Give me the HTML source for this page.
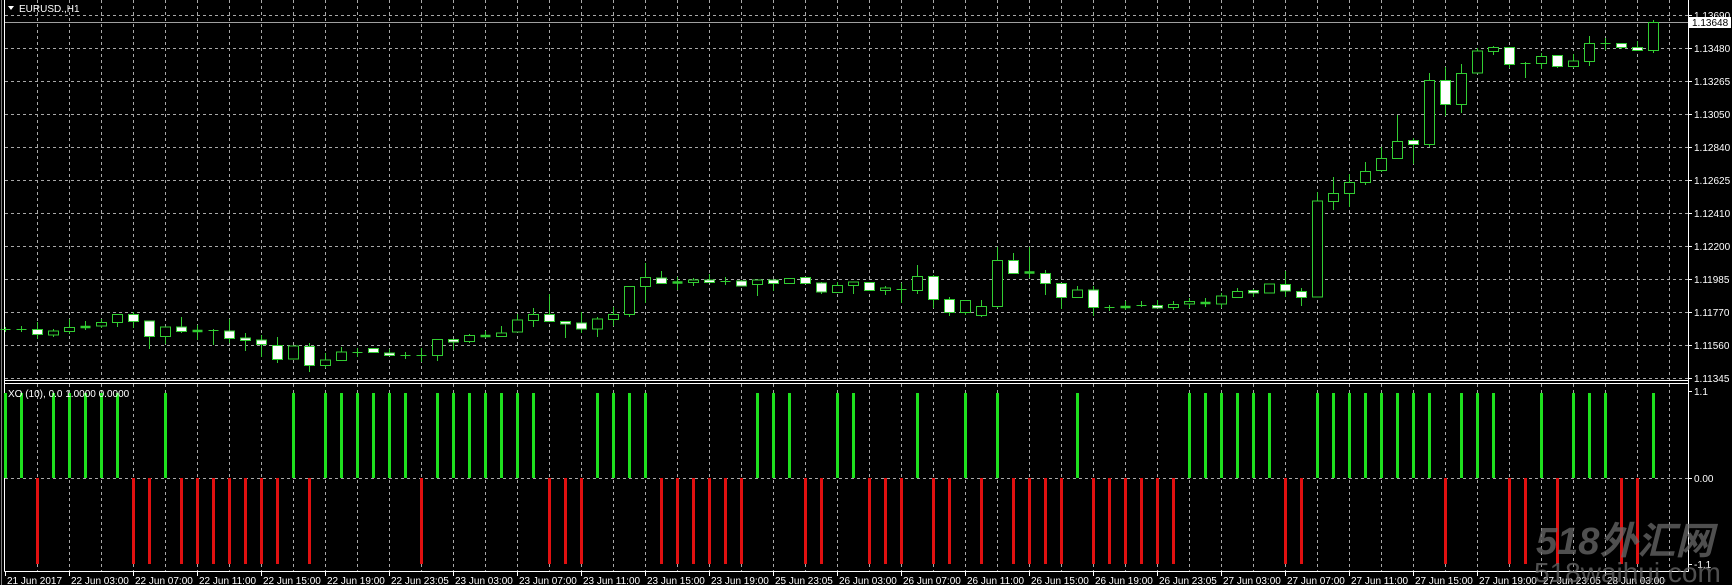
<!DOCTYPE html>
<html><head><meta charset="utf-8"><style>
html,body{margin:0;padding:0;background:#000;overflow:hidden}
svg{display:block}
text{font-family:"Liberation Sans",Arial,sans-serif}
</style></head><body>
<svg width="1732" height="585" viewBox="0 0 1732 585" xmlns="http://www.w3.org/2000/svg">
<rect width="1732" height="585" fill="#000"/>
<g stroke="#a8a8a8" stroke-width="1" stroke-dasharray="3,3" fill="none">
<path d="M37.5 0V380M69.5 0V380M101.5 0V380M133.5 0V380M165.5 0V380M197.5 0V380M229.5 0V380M261.5 0V380M293.5 0V380M325.5 0V380M357.5 0V380M389.5 0V380M421.5 0V380M453.5 0V380M485.5 0V380M517.5 0V380M549.5 0V380M581.5 0V380M613.5 0V380M645.5 0V380M677.5 0V380M709.5 0V380M741.5 0V380M773.5 0V380M805.5 0V380M837.5 0V380M869.5 0V380M901.5 0V380M933.5 0V380M965.5 0V380M997.5 0V380M1029.5 0V380M1061.5 0V380M1093.5 0V380M1125.5 0V380M1157.5 0V380M1189.5 0V380M1221.5 0V380M1253.5 0V380M1285.5 0V380M1317.5 0V380M1349.5 0V380M1381.5 0V380M1413.5 0V380M1445.5 0V380M1477.5 0V380M1509.5 0V380M1541.5 0V380M1573.5 0V380M1605.5 0V380M1637.5 0V380M1669.5 0V380"/>
<path d="M37.5 384V571M69.5 384V571M101.5 384V571M133.5 384V571M165.5 384V571M197.5 384V571M229.5 384V571M261.5 384V571M293.5 384V571M325.5 384V571M357.5 384V571M389.5 384V571M421.5 384V571M453.5 384V571M485.5 384V571M517.5 384V571M549.5 384V571M581.5 384V571M613.5 384V571M645.5 384V571M677.5 384V571M709.5 384V571M741.5 384V571M773.5 384V571M805.5 384V571M837.5 384V571M869.5 384V571M901.5 384V571M933.5 384V571M965.5 384V571M997.5 384V571M1029.5 384V571M1061.5 384V571M1093.5 384V571M1125.5 384V571M1157.5 384V571M1189.5 384V571M1221.5 384V571M1253.5 384V571M1285.5 384V571M1317.5 384V571M1349.5 384V571M1381.5 384V571M1413.5 384V571M1445.5 384V571M1477.5 384V571M1509.5 384V571M1541.5 384V571M1573.5 384V571M1605.5 384V571M1637.5 384V571M1669.5 384V571"/>
<path d="M5 15.5H1688M5 48.5H1688M5 81.5H1688M5 114.5H1688M5 147.5H1688M5 180.5H1688M5 213.5H1688M5 246.5H1688M5 279.5H1688M5 312.5H1688M5 345.5H1688M5 378.5H1688M5 478.5H1688"/>
</g>
<path d="M5 22.5H1688" stroke="#a0a0a0" stroke-width="1"/>
<g stroke="#ffffff" stroke-width="1" fill="none">
<path d="M4.5 0V571.5M1688.5 0V571.5M4.5 380.5H1688.5M4.5 383.5H1688.5M4.5 571.5H1688.5"/>
<path d="M1.5 0V585" stroke="#808080"/>
<path d="M5.5 572V576M69.5 572V576M133.5 572V576M197.5 572V576M261.5 572V576M325.5 572V576M389.5 572V576M453.5 572V576M517.5 572V576M581.5 572V576M645.5 572V576M709.5 572V576M773.5 572V576M837.5 572V576M901.5 572V576M965.5 572V576M1029.5 572V576M1093.5 572V576M1157.5 572V576M1221.5 572V576M1285.5 572V576M1349.5 572V576M1413.5 572V576M1477.5 572V576M1541.5 572V576M1605.5 572V576"/>
<path d="M1688 15.5h4M1688 48.5h4M1688 81.5h4M1688 114.5h4M1688 147.5h4M1688 180.5h4M1688 213.5h4M1688 246.5h4M1688 279.5h4M1688 312.5h4M1688 345.5h4M1688 378.5h4M1688 391.5h4M1688 478.5h4M1688 564.5h4"/>
</g>
<path stroke="#32cd32" stroke-width="1" fill="none" d="M5.5 327V332M21.5 326V332M37.5 322V339M53.5 329V337M69.5 319V334M85.5 321V330M101.5 319V328M117.5 314V327M133.5 312V328M149.5 321V349M165.5 327V344M181.5 317V333M197.5 325V340M213.5 329V345M229.5 319V343M245.5 333V351M261.5 335V357M277.5 337V363M293.5 346V359M309.5 343V372M325.5 353V368M341.5 347V361M357.5 348V357M373.5 348V353M389.5 349V356M405.5 352V359M421.5 348V362M437.5 339V361M453.5 339V350M469.5 334V343M485.5 331V338M501.5 326V337M517.5 314V332M533.5 308V327M549.5 294V322M565.5 321V338M581.5 312V333M597.5 317V337M613.5 307V326M629.5 286V317M645.5 263V303M661.5 271V283M677.5 277V290M693.5 278V286M709.5 274V283M725.5 277V285M741.5 280V286M757.5 280V296M773.5 280V291M789.5 278V284M805.5 277V284M821.5 282V294M837.5 282V293M853.5 282V294M869.5 282V291M885.5 286V295M901.5 283V303M917.5 265V294M933.5 275V308M949.5 297V316M965.5 300V315M981.5 300V317M997.5 247V308M1013.5 253V273M1029.5 247V278M1045.5 270V295M1061.5 283V309M1077.5 286V298M1093.5 286V316M1109.5 305V311M1125.5 301V310M1141.5 301V307M1157.5 300V308M1173.5 301V310M1189.5 298V308M1205.5 298V307M1221.5 293V308M1237.5 288V297M1253.5 289V297M1269.5 284V293M1285.5 271V297M1301.5 288V306M1317.5 192V297M1333.5 177V210M1349.5 174V207M1365.5 162V185M1381.5 147V172M1397.5 115V159M1413.5 138V164M1429.5 73V147M1445.5 67V116M1461.5 64V113M1477.5 48V73M1493.5 46V55M1509.5 47V68M1525.5 62V78M1541.5 53V69M1557.5 55V68M1573.5 54V68M1589.5 36V66M1605.5 38V50M1621.5 43V49M1637.5 41V50M1653.5 20V53"/>
<g fill="#000" stroke="#32cd32" stroke-width="1">
<rect x="48.5" y="331" width="10" height="4"/>
<rect x="64.5" y="327.5" width="10" height="4"/>
<rect x="96.5" y="322.5" width="10" height="3.5"/>
<rect x="112.5" y="314.5" width="10" height="8"/>
<rect x="160.5" y="327" width="10" height="9.5"/>
<rect x="288.5" y="346" width="10" height="13"/>
<rect x="320.5" y="360" width="10" height="5.5"/>
<rect x="336.5" y="352" width="10" height="8.5"/>
<rect x="432.5" y="339.5" width="10" height="16"/>
<rect x="464.5" y="335.5" width="10" height="6"/>
<rect x="496.5" y="333" width="10" height="3.5"/>
<rect x="512.5" y="320" width="10" height="12"/>
<rect x="528.5" y="314.5" width="10" height="6"/>
<rect x="592.5" y="319" width="10" height="10"/>
<rect x="608.5" y="314.5" width="10" height="5"/>
<rect x="624.5" y="286.5" width="10" height="28"/>
<rect x="640.5" y="277.5" width="10" height="9"/>
<rect x="688.5" y="280" width="10" height="2.5"/>
<rect x="752.5" y="280" width="10" height="4.5"/>
<rect x="784.5" y="278.5" width="10" height="5"/>
<rect x="832.5" y="285.5" width="10" height="7"/>
<rect x="848.5" y="282" width="10" height="3.5"/>
<rect x="880.5" y="288" width="10" height="2.5"/>
<rect x="912.5" y="276.5" width="10" height="14"/>
<rect x="960.5" y="300.5" width="10" height="12"/>
<rect x="976.5" y="306.5" width="10" height="9"/>
<rect x="992.5" y="260.5" width="10" height="46"/>
<rect x="1072.5" y="290" width="10" height="7.5"/>
<rect x="1168.5" y="304.5" width="10" height="3"/>
<rect x="1184.5" y="301.5" width="10" height="2.5"/>
<rect x="1216.5" y="296" width="10" height="8"/>
<rect x="1232.5" y="291.5" width="10" height="6"/>
<rect x="1264.5" y="284" width="10" height="9"/>
<rect x="1312.5" y="201" width="10" height="96"/>
<rect x="1328.5" y="193.5" width="10" height="8"/>
<rect x="1344.5" y="182.5" width="10" height="11"/>
<rect x="1360.5" y="171.5" width="10" height="11"/>
<rect x="1376.5" y="158.5" width="10" height="12"/>
<rect x="1392.5" y="141.5" width="10" height="17"/>
<rect x="1424.5" y="80.5" width="10" height="64"/>
<rect x="1456.5" y="73.5" width="10" height="31"/>
<rect x="1472.5" y="51" width="10" height="22"/>
<rect x="1488.5" y="47.5" width="10" height="4"/>
<rect x="1536.5" y="56.5" width="10" height="7"/>
<rect x="1568.5" y="61" width="10" height="5.5"/>
<rect x="1584.5" y="43.5" width="10" height="18"/>
<rect x="1648.5" y="22.5" width="10" height="28"/>
</g>
<g fill="#fff" stroke="#32cd32" stroke-width="1">
<rect x="32.5" y="329.5" width="10" height="5"/>
<rect x="128.5" y="314.5" width="10" height="7"/>
<rect x="144.5" y="321" width="10" height="15.5"/>
<rect x="176.5" y="327" width="10" height="4.5"/>
<rect x="224.5" y="331" width="10" height="7.5"/>
<rect x="240.5" y="338" width="10" height="2.5"/>
<rect x="256.5" y="340" width="10" height="4.5"/>
<rect x="272.5" y="345.5" width="10" height="14"/>
<rect x="304.5" y="346.5" width="10" height="19"/>
<rect x="368.5" y="348.5" width="10" height="4"/>
<rect x="384.5" y="353" width="10" height="2.5"/>
<rect x="448.5" y="339.5" width="10" height="2.5"/>
<rect x="544.5" y="314.5" width="10" height="7"/>
<rect x="560.5" y="321.5" width="10" height="2.5"/>
<rect x="576.5" y="323" width="10" height="6"/>
<rect x="656.5" y="278" width="10" height="5.5"/>
<rect x="704.5" y="280" width="10" height="2.5"/>
<rect x="736.5" y="281" width="10" height="5"/>
<rect x="768.5" y="280" width="10" height="3.5"/>
<rect x="800.5" y="277.5" width="10" height="6"/>
<rect x="816.5" y="283" width="10" height="9"/>
<rect x="864.5" y="282.5" width="10" height="8"/>
<rect x="928.5" y="276.5" width="10" height="23"/>
<rect x="944.5" y="299.5" width="10" height="13"/>
<rect x="1008.5" y="260.5" width="10" height="13"/>
<rect x="1040.5" y="273.5" width="10" height="10"/>
<rect x="1056.5" y="283.5" width="10" height="14"/>
<rect x="1088.5" y="290" width="10" height="17.5"/>
<rect x="1152.5" y="305.5" width="10" height="2.5"/>
<rect x="1248.5" y="290.5" width="10" height="2.5"/>
<rect x="1280.5" y="284.5" width="10" height="6.5"/>
<rect x="1296.5" y="291.5" width="10" height="6"/>
<rect x="1408.5" y="140.5" width="10" height="4"/>
<rect x="1440.5" y="80.5" width="10" height="24"/>
<rect x="1504.5" y="47.5" width="10" height="17"/>
<rect x="1552.5" y="55.5" width="10" height="11"/>
<rect x="1616.5" y="43.5" width="10" height="4"/>
<rect x="1632.5" y="47.5" width="10" height="3"/>
</g>
<path stroke="#32cd32" stroke-width="1" fill="none" d="M0.5 329.5h10M16.5 329.5h10M208.5 330.5h10M352.5 352.5h10M400.5 355.5h10M416.5 355.5h10M720.5 281.5h10M896.5 289.5h10M1104.5 307.5h10M1136.5 305.5h10M1520.5 63.5h10M1600.5 43.5h10"/>
<path stroke="#32cd32" stroke-width="2.5" fill="none" d="M80.5 327h10M192.5 331h10M480.5 336h10M672.5 282.5h10M1024.5 272.5h10M1120.5 307h10M1200.5 303h10"/>
<path stroke="#1ee01e" stroke-width="3" fill="none" d="M5.5 393V478M21.5 393V478M53.5 393V478M69.5 393V478M85.5 393V478M101.5 393V478M117.5 393V478M165.5 393V478M293.5 393V478M325.5 393V478M341.5 393V478M357.5 393V478M373.5 393V478M389.5 393V478M405.5 393V478M437.5 393V478M453.5 393V478M469.5 393V478M485.5 393V478M501.5 393V478M517.5 393V478M533.5 393V478M597.5 393V478M613.5 393V478M629.5 393V478M645.5 393V478M757.5 393V478M773.5 393V478M789.5 393V478M837.5 393V478M853.5 393V478M917.5 393V478M965.5 393V478M997.5 393V478M1077.5 393V478M1189.5 393V478M1205.5 393V478M1221.5 393V478M1237.5 393V478M1253.5 393V478M1269.5 393V478M1317.5 393V478M1333.5 393V478M1349.5 393V478M1365.5 393V478M1381.5 393V478M1397.5 393V478M1413.5 393V478M1429.5 393V478M1461.5 393V478M1477.5 393V478M1493.5 393V478M1541.5 393V478M1573.5 393V478M1589.5 393V478M1605.5 393V478M1653.5 393V478"/>
<path stroke="#e01010" stroke-width="3" fill="none" d="M37.5 478V564M133.5 478V564M149.5 478V564M181.5 478V564M197.5 478V564M213.5 478V564M229.5 478V564M245.5 478V564M261.5 478V564M277.5 478V564M309.5 478V564M421.5 478V564M549.5 478V564M565.5 478V564M581.5 478V564M661.5 478V564M677.5 478V564M693.5 478V564M709.5 478V564M725.5 478V564M741.5 478V564M805.5 478V564M821.5 478V564M869.5 478V564M885.5 478V564M901.5 478V564M933.5 478V564M949.5 478V564M981.5 478V564M1013.5 478V564M1029.5 478V564M1045.5 478V564M1061.5 478V564M1093.5 478V564M1109.5 478V564M1125.5 478V564M1141.5 478V564M1157.5 478V564M1173.5 478V564M1285.5 478V564M1301.5 478V564M1445.5 478V564M1509.5 478V564M1525.5 478V564M1557.5 478V564M1621.5 478V564M1637.5 478V564"/>
<polygon points="8,6 14,6 11,10" fill="#fff"/>
<text x="19" y="12" font-size="10" fill="#fff">EURUSD.,H1</text>
<text x="8" y="397" font-size="10" fill="#fff">XO (10), 0.0 1.0000 0.0000</text>
<g font-size="10" fill="#fff">
<text x="1694" y="19">1.13690</text>
<text x="1694" y="52">1.13480</text>
<text x="1694" y="85">1.13265</text>
<text x="1694" y="118">1.13050</text>
<text x="1694" y="151">1.12840</text>
<text x="1694" y="184">1.12625</text>
<text x="1694" y="217">1.12410</text>
<text x="1694" y="250">1.12200</text>
<text x="1694" y="283">1.11985</text>
<text x="1694" y="316">1.11770</text>
<text x="1694" y="349">1.11560</text>
<text x="1694" y="382">1.11345</text>
<text x="1694" y="395">1.1</text>
<text x="1694" y="482">0.00</text>
<text x="1694" y="568">-1.1</text>
</g>
<rect x="1689" y="17" width="42" height="11" fill="#fff"/>
<text x="1692" y="26" font-size="10" fill="#000">1.13648</text>
<g font-size="10" fill="#fff">
<text x="7" y="584">21 Jun 2017</text>
<text x="71" y="584">22 Jun 03:00</text>
<text x="135" y="584">22 Jun 07:00</text>
<text x="199" y="584">22 Jun 11:00</text>
<text x="263" y="584">22 Jun 15:00</text>
<text x="327" y="584">22 Jun 19:00</text>
<text x="391" y="584">22 Jun 23:05</text>
<text x="455" y="584">23 Jun 03:00</text>
<text x="519" y="584">23 Jun 07:00</text>
<text x="583" y="584">23 Jun 11:00</text>
<text x="647" y="584">23 Jun 15:00</text>
<text x="711" y="584">23 Jun 19:00</text>
<text x="775" y="584">25 Jun 23:05</text>
<text x="839" y="584">26 Jun 03:00</text>
<text x="903" y="584">26 Jun 07:00</text>
<text x="967" y="584">26 Jun 11:00</text>
<text x="1031" y="584">26 Jun 15:00</text>
<text x="1095" y="584">26 Jun 19:00</text>
<text x="1159" y="584">26 Jun 23:05</text>
<text x="1223" y="584">27 Jun 03:00</text>
<text x="1287" y="584">27 Jun 07:00</text>
<text x="1351" y="584">27 Jun 11:00</text>
<text x="1415" y="584">27 Jun 15:00</text>
<text x="1479" y="584">27 Jun 19:00</text>
<text x="1543" y="584">27 Jun 23:05</text>
<text x="1607" y="584">28 Jun 03:00</text>
</g>
<text x="1536" y="554" font-size="38" font-style="italic" font-weight="bold" fill="#6a6a6a" fill-opacity="0.75" style='font-family:"Liberation Sans","Noto Sans CJK SC",sans-serif'>518外汇网</text>
<text x="1534" y="582" font-size="28" fill="#6a6a6a" fill-opacity="0.75">518waihui.com</text>
</svg>
</body></html>
